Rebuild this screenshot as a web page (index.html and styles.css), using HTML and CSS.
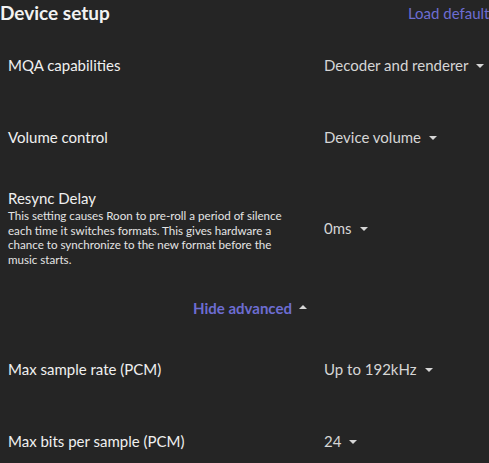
FILE: index.html
```html
<!DOCTYPE html>
<html lang="en">
<head>
  <meta charset="UTF-8" />
  <title>Device setup</title>
  <link rel="stylesheet" href="styles.css">
</head>
<body>
  <div class="panel">
    <header class="panel-head">
      <h1>Device setup</h1>
      <a class="load-defaults" href="#">Load defaults</a>
    </header>

    <div class="setting">
      <div class="setting-label">MQA capabilities</div>
      <div class="setting-value">Decoder and renderer <span class="caret"></span></div>
    </div>

    <div class="setting">
      <div class="setting-label">Volume control</div>
      <div class="setting-value">Device volume <span class="caret"></span></div>
    </div>

    <div class="setting setting-tall">
      <div class="setting-label">
        Resync Delay
        <p class="setting-help">This setting causes Roon to pre-roll a period of silence each time it switches formats. This gives hardware a chance to synchronize to the new format before the music starts.</p>
      </div>
      <div class="setting-value">0ms <span class="caret"></span></div>
    </div>

    <div class="advanced-toggle">
      <a href="#">Hide advanced</a> <span class="caret caret-up"></span>
    </div>

    <div class="setting">
      <div class="setting-label">Max sample rate (PCM)</div>
      <div class="setting-value">Up to 192kHz <span class="caret"></span></div>
    </div>

    <div class="setting">
      <div class="setting-label">Max bits per sample (PCM)</div>
      <div class="setting-value">24 <span class="caret"></span></div>
    </div>
  </div>
</body>
</html>
```

FILE: styles.css
```css
html, body {
  margin: 0;
  overflow: hidden;
}

body {
  background-color: #252525;
  color: #ececec;
  font-family: Lato, 'Liberation Sans', sans-serif;
}

.panel {
  width: 496px;
}

.panel-head {
  display: flex;
  align-items: center;
  justify-content: space-between;
  height: 25px;
  margin-bottom: 4px;
}

.panel-head h1 {
  margin: 0;
  font-size: 19px;
  font-weight: 700;
  color: #f2f2f2;
}

.load-defaults {
  color: #6d6dd2;
  text-decoration: none;
  font-size: 15px;
}

.setting {
  display: grid;
  grid-template-columns: 316px 1fr;
  align-items: center;
  min-height: 72px;
  padding-left: 8px;
  font-size: 15px;
}

.setting-tall {
  padding: 16px 0 16px 8px;
}

.setting-label {
  color: #f0f0f0;
}

.setting-help {
  margin: 2px 0 0;
  font-size: 11.6px;
  line-height: 14.5px;
  color: #e4e4e4;
  width: 290px;
}

.setting-value {
  color: #d6d6d6;
  display: flex;
  align-items: center;
  gap: 8px;
}

.caret {
  width: 0;
  height: 0;
  border-left: 4px solid transparent;
  border-right: 4px solid transparent;
  border-top: 4px solid #d6d6d6;
  margin-top: 2px;
}

.caret-up {
  border-top: none;
  border-bottom: 4px solid #d6d6d6;
  margin-top: -2px;
}

.advanced-toggle {
  display: flex;
  align-items: center;
  justify-content: center;
  gap: 7px;
  height: 50px;
  padding-left: 4px;
  font-size: 15px;
  font-weight: 700;
}

.advanced-toggle a {
  color: #6d6dd2;
  text-decoration: none;
}
```
